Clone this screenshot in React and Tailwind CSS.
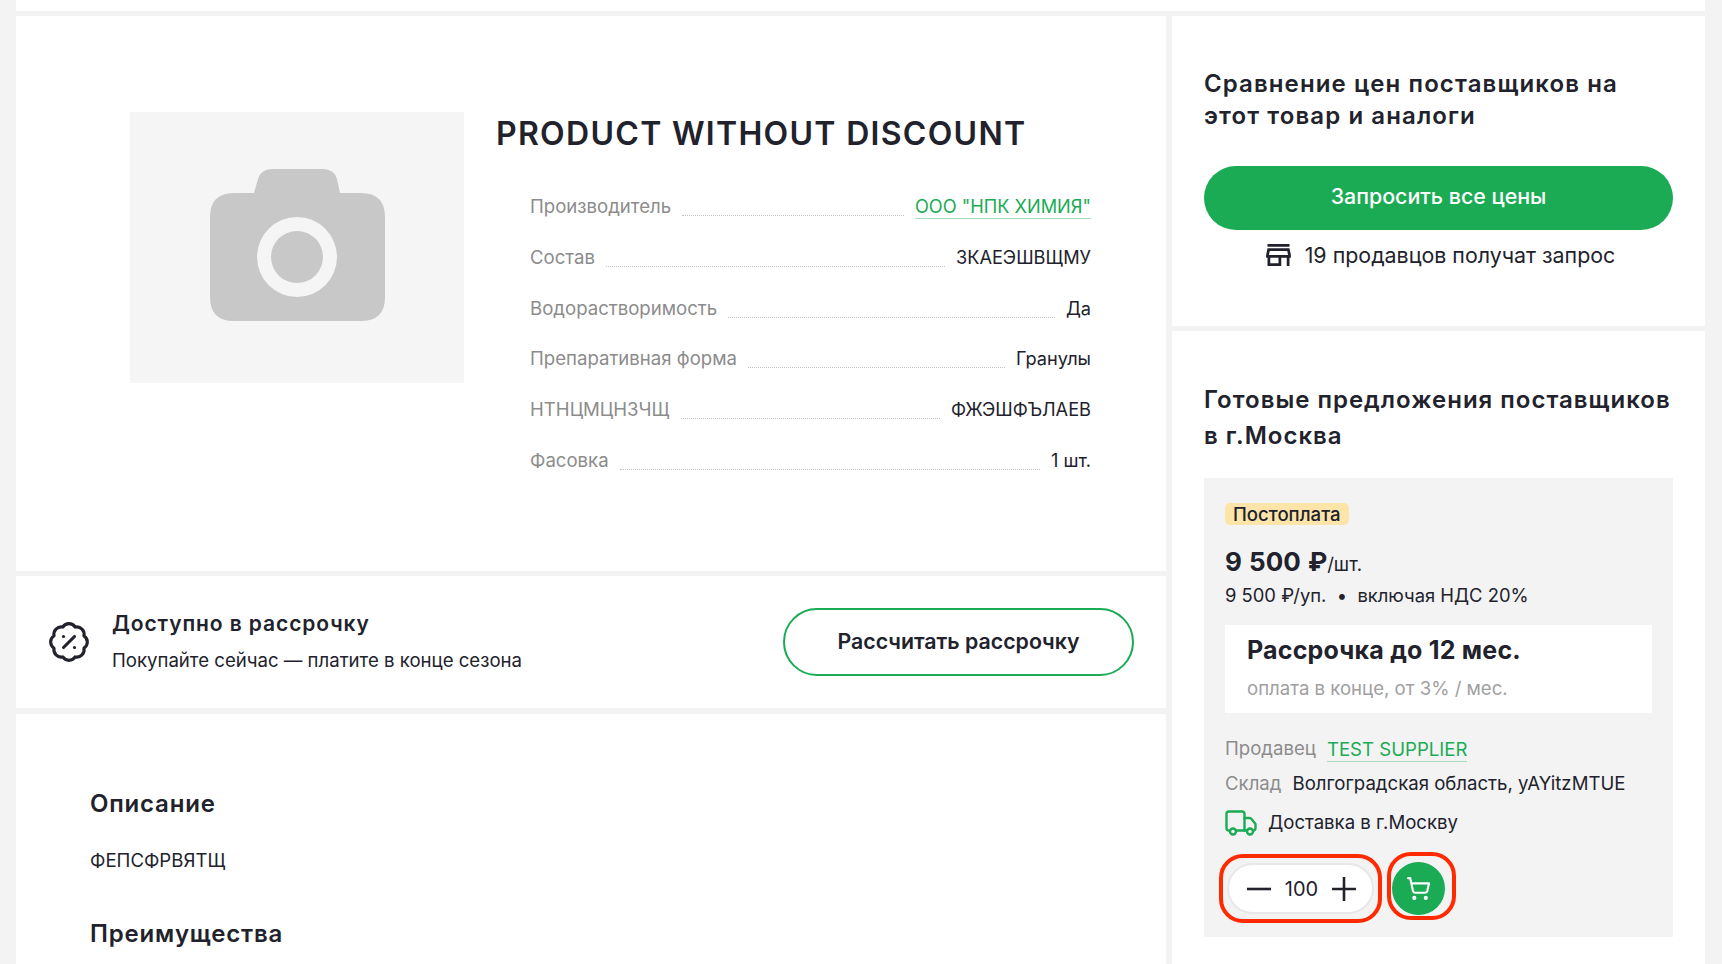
import React from "react";
import { BadgePercent, ShoppingCart } from "lucide-react";

const specs = [
  ["Производитель", 'ООО "НПК ХИМИЯ"', true],
  ["Состав", "ЗКАЕЭШВЩМУ"],
  ["Водорастворимость", "Да"],
  ["Препаративная форма", "Гранулы"],
  ["НТНЦМЦНЗЧЩ", "ФЖЭШФЪЛАЕВ"],
  ["Фасовка", "1 шт."],
];

const CameraIcon = () => (
  <svg width="175" height="152" viewBox="0 0 175 152">
    <path
      d="M24 24H44L48 10Q51 0 62 0H113Q124 0 127 10L130 24H151Q175 24 175 48V128Q175 152 151 152H24Q0 152 0 128V48Q0 24 24 24Z"
      fill="#c8c8c8"
    />
    <circle cx="87" cy="88" r="40" fill="#f5f5f5" />
    <circle cx="87" cy="88" r="26" fill="#c8c8c8" />
  </svg>
);

const StoreIcon = () => (
  <svg width="25" height="22" viewBox="3 4 18 16" fill="#21222c">
    <path d="M20 4H4v2h16V4zm1 10v-2l-1-5H4l-1 5v2h1v6h10v-6h4v6h2v-6h1zm-9 4H6v-4h6v4zm-6.96-6l.6-3h12.72l.6 3H5.04z" />
  </svg>
);

const TruckIcon = () => (
  <svg width="32" height="26" viewBox="0 0 32 26" fill="none" stroke="#1bab55" strokeWidth="2.4" strokeLinecap="round" strokeLinejoin="round">
    <path d="M4 20.5Q1.5 20.5 1.5 18V4Q1.5 1.5 4 1.5H17Q19.5 1.5 19.5 4V20.5H12" />
    <path d="M19.5 8H24Q25.5 8 26.5 9L30.5 14V18Q30.5 20.5 28 20.5" />
    <path d="M19.5 20.5H22" />
    <circle cx="8" cy="21.5" r="3" />
    <circle cx="25" cy="21.5" r="3" />
  </svg>
);

const SpecRow = ({ label, value, link }) => (
  <div className="flex items-end h-[28px] text-[18.6px] leading-[28px]">
    <span className="text-[#8c8c8c]">{label}</span>
    <span className="flex-1 mx-[11px] mb-[4px] border-b border-dotted border-[#c4c4c4]"></span>
    {link ? (
      <span className="text-[18.2px] text-[#1bab55] leading-[24px] mb-[1px] border-b border-[#a6dcbb]">{value}</span>
    ) : (
      <span className="text-[18.2px]">{value}</span>
    )}
  </div>
);

export default function App() {
  return (
    <div className="h-[964px] overflow-hidden bg-[#f3f3f3] pl-4 pr-[17px] text-[#21222c] font-['Inter',sans-serif]">
      <div className="h-[11px] bg-white"></div>
      <div className="mt-[5px] grid grid-cols-[1150px_533px] gap-x-[6px]">
        <div className="flex flex-col">
          <div className="h-[555px] bg-white pt-[96px] pl-[114px] flex">
            <div className="w-[334px] h-[271px] bg-[#f5f5f5] flex justify-center pt-[57px]">
              <CameraIcon />
            </div>
            <div className="ml-[32px] w-[595px]">
              <h1 className="mt-[2px] h-[40px] text-[32px] leading-[40px] font-semibold tracking-[1.3px] whitespace-nowrap">
                PRODUCT WITHOUT DISCOUNT
              </h1>
              <div className="mt-[38px] pl-[34px] flex flex-col gap-y-[22.8px]">
                {specs.map(([label, value, link]) => (
                  <SpecRow key={label} label={label} value={value} link={link} />
                ))}
              </div>
            </div>
          </div>

          <div className="mt-[5px] h-[132px] bg-white pl-[31px] pr-[32px] flex items-center">
            <BadgePercent size={44} strokeWidth={1.7} color="#21222c" />
            <div className="ml-[21px] flex-1">
              <div className="text-[21px] leading-[28px] font-semibold tracking-[0.9px]">Доступно в рассрочку</div>
              <div className="mt-[8px] text-[18.6px] leading-[28px]">Покупайте сейчас — платите в конце сезона</div>
            </div>
            <button className="w-[351px] h-[68px] pb-[1px] rounded-[34px] border-2 border-[#1bab55] text-[21.3px] font-semibold">
              Рассчитать рассрочку
            </button>
          </div>

          <div className="mt-[6px] h-[250px] bg-white pl-[74px] pt-[72px]">
            <h2 className="text-[24px] leading-[36px] font-semibold tracking-[0.8px]">Описание</h2>
            <p className="mt-[20px] text-[18.6px] leading-[36px]">ФЕПСФРВЯТЩ</p>
            <h2 className="mt-[38px] text-[24px] leading-[36px] font-semibold tracking-[0.8px]">Преимущества</h2>
          </div>
        </div>

        <div className="flex flex-col">
          <div className="h-[310px] bg-white px-[32px] pt-[52px]">
            <h2 className="text-[24px] leading-[32px] font-semibold tracking-[1.1px]">
              Сравнение цен поставщиков на<br />этот товар и аналоги
            </h2>
            <button className="mt-[34px] w-full h-[64px] pb-[3px] rounded-[32px] bg-[#1bab55] text-white text-[21.4px] font-medium">
              Запросить все цены
            </button>
            <div className="mt-[9px] h-[32px] pl-[4px] flex items-center justify-center gap-x-[14px] text-[21.4px] leading-[32px]">
              <StoreIcon />
              <span>19 продавцов получат запрос</span>
            </div>
          </div>

          <div className="mt-[5px] h-[640px] bg-white px-[32px] pt-[51px]">
            <h2 className="text-[24px] leading-[36px] font-semibold tracking-[1px]">
              Готовые предложения поставщиков в г.Москва
            </h2>
            <div className="mt-[24px] h-[459px] bg-[#f3f3f3] pt-[25px] px-[21px]">
              <div className="w-fit h-[22px] px-[8px] rounded-[5px] bg-[#fde5a9] text-[18.6px] leading-[22px] font-medium">
                Постоплата
              </div>
              <div className="mt-[19px] h-[36px] flex items-baseline leading-[36px]">
                <span className="text-[26px] font-bold [word-spacing:1px]">9 500 ₽</span>
                <span className="text-[18.6px]">/шт.</span>
              </div>
              <div className="text-[18.4px] leading-[30px]">9 500 ₽/уп. &nbsp;•&nbsp; включая НДС 20%</div>
              <div className="mt-[15px] h-[88px] w-[427px] bg-white pl-[22px] pt-[7px]">
                <div className="text-[25px] leading-[36px] font-bold tracking-[0.2px]">Рассрочка до 12 мес.</div>
                <div className="mt-[5px] text-[18.6px] leading-[30px] text-[#a0a0a0]">оплата в конце, от 3% / мес.</div>
              </div>
              <div className="mt-[23px] h-[26px] flex items-center text-[18.6px]">
                <span className="text-[#8c8c8c]">Продавец</span>
                <span className="ml-[11px] text-[#1bab55] leading-[24px] mt-[1px] border-b border-[#a6dcbb]">TEST SUPPLIER</span>
              </div>
              <div className="mt-[9px] h-[26px] flex items-center text-[18.6px]">
                <span className="text-[#8c8c8c]">Склад</span>
                <span className="ml-[11px]">Волгоградская область, yAYitzMTUE</span>
              </div>
              <div className="mt-[12px] h-[28px] flex items-center text-[18.6px]">
                <TruckIcon />
                <span className="ml-[11px]">Доставка в г.Москву</span>
              </div>
              <div className="mt-[15px] -ml-[6px] flex items-start">
                <div className="mt-[2px] w-[163px] h-[69px] rounded-[24px] border-4 border-[#ff2a00] flex items-center justify-center">
                  <div className="w-[147px] h-[51px] rounded-full bg-white border-2 border-[#e8e8e8] flex items-center justify-between pl-[18px] pr-[16px] text-[20px]">
                    <svg width="24" height="24" viewBox="0 0 24 24" stroke="#21222c" strokeWidth="2.6"><path d="M0 12H24" /></svg>
                    <span>100</span>
                    <svg width="24" height="24" viewBox="0 0 24 24" stroke="#21222c" strokeWidth="2.6"><path d="M0 12H24M12 0V24" /></svg>
                  </div>
                </div>
                <div className="ml-[5px] w-[69px] h-[68px] rounded-[24px] border-4 border-[#ff2a00] pt-[6px] pl-[1px]">
                  <div className="w-[53px] h-[53px] rounded-full bg-[#1bab55] flex items-center justify-center">
                    <ShoppingCart size={25} color="#fff" strokeWidth={2} />
                  </div>
                </div>
              </div>
            </div>
          </div>
        </div>
      </div>
    </div>
  );
}
